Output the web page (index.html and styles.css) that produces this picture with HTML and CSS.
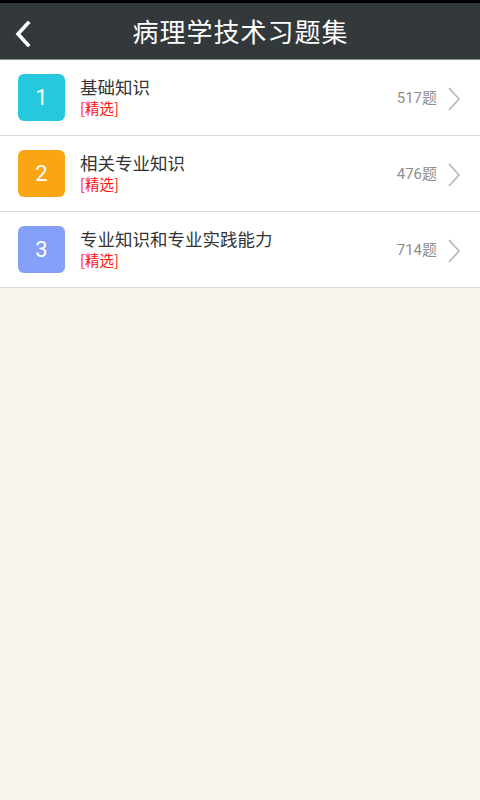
FILE: index.html
```html
<!DOCTYPE html>
<html>
<head>
    <meta http-equiv="Content-Type" content="text/html; charset=utf-8" />
    <title>病理学技术习题集</title>
    <link rel="stylesheet" href="styles.css">
</head>
<body>

<div class="status-bar"></div>

<!--标题栏-->
<div class="top-bar">
    <a href="#" class="top-bar-back">
        <svg width="18" height="26" viewBox="0 0 18 26">
            <path d="M14 2 L4 13 L14 24" fill="none" stroke="#fff" stroke-width="3.6" stroke-linecap="square"/>
        </svg>
    </a>
    <div class="top-bar-title">病理学技术习题集</div>
</div>

<!--章节列表-->
<div class="list">
    <a href="#" class="list-item">
        <span class="list-num list-num-cyan">1</span>
        <span class="list-text">
            <span class="list-name">基础知识</span>
            <span class="list-tag">[精选]</span>
        </span>
        <span class="list-count">517题</span>
        <svg class="list-arrow" width="14" height="24" viewBox="0 0 14 24">
            <path d="M2 1 L12 12 L2 23" fill="none" stroke="#b5b5b5" stroke-width="1.6"/>
        </svg>
    </a>
    <a href="#" class="list-item">
        <span class="list-num list-num-orange">2</span>
        <span class="list-text">
            <span class="list-name">相关专业知识</span>
            <span class="list-tag">[精选]</span>
        </span>
        <span class="list-count">476题</span>
        <svg class="list-arrow" width="14" height="24" viewBox="0 0 14 24">
            <path d="M2 1 L12 12 L2 23" fill="none" stroke="#b5b5b5" stroke-width="1.6"/>
        </svg>
    </a>
    <a href="#" class="list-item">
        <span class="list-num list-num-blue">3</span>
        <span class="list-text">
            <span class="list-name">专业知识和专业实践能力</span>
            <span class="list-tag">[精选]</span>
        </span>
        <span class="list-count">714题</span>
        <svg class="list-arrow" width="14" height="24" viewBox="0 0 14 24">
            <path d="M2 1 L12 12 L2 23" fill="none" stroke="#b5b5b5" stroke-width="1.6"/>
        </svg>
    </a>
</div>

</body>
</html>
```

FILE: styles.css
```css
html, body{
    height: 100%;
}
body{
    padding: 0px;margin: 0px;
    font-family: "Noto Sans CJK SC", "Noto Sans", sans-serif;
    background: #f7f4ee;
}
a{text-decoration: none;}

.status-bar{
    height: 3px;background: #000;
}

/*标题栏*/
.top-bar{
    height: 56px;
    display: flex;align-items: center;justify-content: center;
    position: relative;
    background: #33383b;
    border-bottom: 1px solid #8e9193;
}
.top-bar-back{
    position: absolute;left: 14px;top: 18px;
    display: block;width: 18px;height: 26px;
}
.top-bar-back svg{display: block;}
.top-bar-title{
    color: #fff;font-size: 26px;letter-spacing: 1px;
    line-height: 56px;
    padding-left: 1px;
}

/*列表*/
.list{
    background: #fff;
}
.list-item{
    height: 75px;
    display: flex;align-items: center;
    padding: 0px 19px 0px 18px;
    border-bottom: 1px solid #dcdcdc;
}
.list-num{
    width: 47px;height: 47px;border-radius: 6px;
    display: flex;align-items: center;justify-content: center;
    color: #fff;font-size: 22px;
    font-family: Roboto, "Noto Sans", sans-serif;
    flex-shrink: 0;
}
.list-num-cyan{background: #25c8dc;}
.list-num-orange{background: #f9a514;}
.list-num-blue{background: #84a0f9;}

.list-text{
    flex: 1;
    display: flex;flex-direction: column;gap: 2px;
    padding-left: 15px;
    padding-bottom: 2px;
}
.list-name{
    font-size: 17.5px;color: #333;line-height: 20px;
}
.list-tag{
    font-size: 14.5px;color: #f11;line-height: 17px;
}
.list-count{
    font-size: 15px;color: #8f8f8f;
    font-family: Roboto, "Noto Sans CJK SC", sans-serif;
    margin-right: 10px;
    padding-bottom: 2px;
}
.list-arrow{
    display: block;flex-shrink: 0;
    padding-top: 2px;
}
```
